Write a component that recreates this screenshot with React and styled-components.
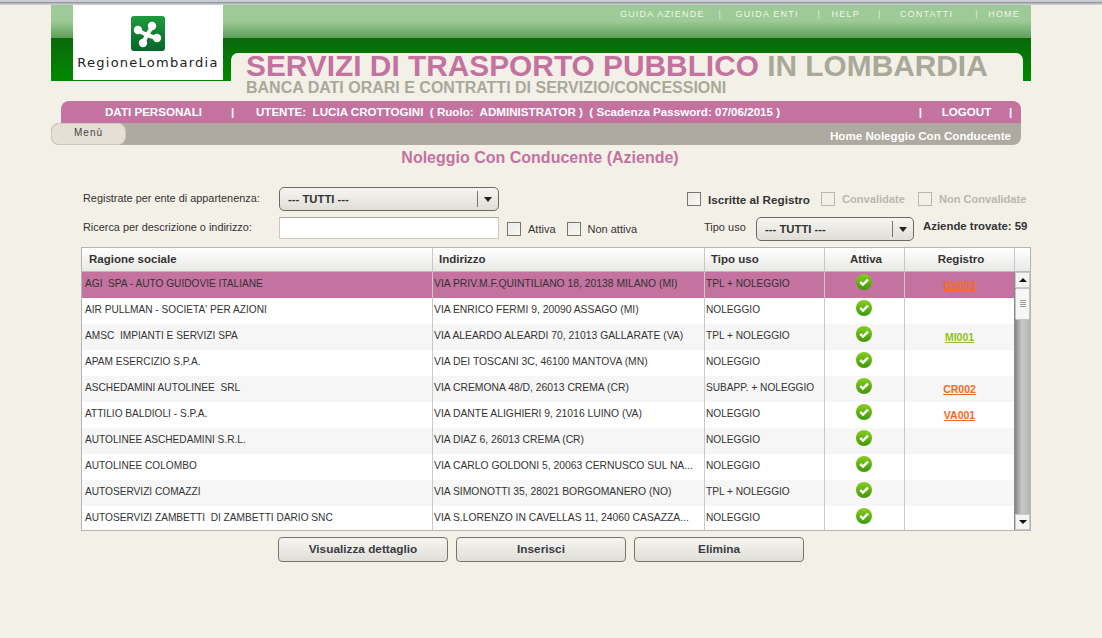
import styled, { createGlobalStyle } from 'styled-components';

const GlobalStyle = createGlobalStyle`
  html, body { margin: 0; padding: 0; }
  body {
    background: #f3f0e8;
    font-family: 'Liberation Sans', Arial, sans-serif;
    color: #333;
    overflow: hidden;
  }
`;

const pink = '#c4729f';
const columns = '351px 272px 120px 80px 110px 16px';

const aziende = [
  { nome: 'AGI  SPA - AUTO GUIDOVIE ITALIANE', indirizzo: 'VIA PRIV.M.F.QUINTILIANO 18, 20138 MILANO (MI)', uso: 'TPL + NOLEGGIO', registro: 'BS003', colore: '#f26a1b' },
  { nome: "AIR PULLMAN - SOCIETA' PER AZIONI", indirizzo: 'VIA ENRICO FERMI 9, 20090 ASSAGO (MI)', uso: 'NOLEGGIO' },
  { nome: 'AMSC  IMPIANTI E SERVIZI SPA', indirizzo: 'VIA ALEARDO ALEARDI 70, 21013 GALLARATE (VA)', uso: 'TPL + NOLEGGIO', registro: 'MI001', colore: '#8dc21f' },
  { nome: 'APAM ESERCIZIO S.P.A.', indirizzo: 'VIA DEI TOSCANI 3C, 46100 MANTOVA (MN)', uso: 'NOLEGGIO' },
  { nome: 'ASCHEDAMINI AUTOLINEE  SRL', indirizzo: 'VIA CREMONA 48/D, 26013 CREMA (CR)', uso: 'SUBAPP. + NOLEGGIO', registro: 'CR002', colore: '#f26a1b' },
  { nome: 'ATTILIO BALDIOLI - S.P.A.', indirizzo: 'VIA DANTE ALIGHIERI 9, 21016 LUINO (VA)', uso: 'NOLEGGIO', registro: 'VA001', colore: '#f26a1b' },
  { nome: 'AUTOLINEE ASCHEDAMINI S.R.L.', indirizzo: 'VIA DIAZ 6, 26013 CREMA (CR)', uso: 'NOLEGGIO' },
  { nome: 'AUTOLINEE COLOMBO', indirizzo: 'VIA CARLO GOLDONI 5, 20063 CERNUSCO SUL NA...', uso: 'NOLEGGIO' },
  { nome: 'AUTOSERVIZI COMAZZI', indirizzo: 'VIA SIMONOTTI 35, 28021 BORGOMANERO (NO)', uso: 'TPL + NOLEGGIO' },
  { nome: 'AUTOSERVIZI ZAMBETTI  DI ZAMBETTI DARIO SNC', indirizzo: 'VIA S.LORENZO IN CAVELLAS 11, 24060 CASAZZA...', uso: 'NOLEGGIO' },
];

function LogoMark() {
  return (
    <svg width="34" height="35" viewBox="0 0 34 35">
      <defs>
        <linearGradient id="logoGreen" x1="0" y1="0" x2="0" y2="1">
          <stop offset="0" stopColor="#1f9a3c" />
          <stop offset="1" stopColor="#04662a" />
        </linearGradient>
      </defs>
      <rect width="34" height="35" rx="3" fill="url(#logoGreen)" />
      <g stroke="#fff" strokeWidth="4" strokeLinecap="round">
        <line x1="8" y1="15" x2="16" y2="19" />
        <line x1="21" y1="11" x2="16" y2="19" />
        <line x1="25" y1="22" x2="16" y2="19" />
        <line x1="12" y1="27" x2="16" y2="19" />
      </g>
      <circle cx="7" cy="14" r="4.2" fill="#fff" />
      <circle cx="21" cy="10" r="4.2" fill="#fff" />
      <circle cx="26" cy="22" r="4.2" fill="#fff" />
      <circle cx="12" cy="27" r="4.2" fill="#fff" />
    </svg>
  );
}

function CheckIcon() {
  return (
    <svg width="16" height="16" viewBox="0 0 16 16">
      <defs>
        <linearGradient id="checkGreen" x1="0" y1="0" x2="0" y2="1">
          <stop offset="0" stopColor="#86d01e" />
          <stop offset="1" stopColor="#3f9606" />
        </linearGradient>
      </defs>
      <circle cx="8" cy="8" r="8" fill="url(#checkGreen)" />
      <path d="M4.2 8 L7 10.6 L12 5.6" fill="none" stroke="#fff" strokeWidth="2.4" />
    </svg>
  );
}

export default function App() {
  return (
    <>
      <GlobalStyle />
      <BrowserEdge />
      <Shell>
        <Header>
          <LogoBox>
            <LogoMark />
            <LogoText>RegioneLombardia</LogoText>
          </LogoBox>
          <HeaderMain>
            <TopNav>
              <span>GUIDA AZIENDE</span>
              <NavSep $width={31} $pad={14}>|</NavSep>
              <span>GUIDA ENTI</span>
              <NavSep $width={33} $pad={19}>|</NavSep>
              <span>HELP</span>
              <NavSep $width={40} $pad={18}>|</NavSep>
              <span>CONTATTI</span>
              <NavSep $width={35} $pad={22}>|</NavSep>
              <span>HOME</span>
            </TopNav>
            <TitlePanel>
              <Title>
                SERVIZI DI TRASPORTO PUBBLICO <TitleGrey>IN LOMBARDIA</TitleGrey>
              </Title>
              <Subtitle>BANCA DATI ORARI E CONTRATTI DI SERVIZIO/CONCESSIONI</Subtitle>
            </TitlePanel>
          </HeaderMain>
        </Header>

        <UserBar>
          <UserItem $width={127}>DATI PERSONALI</UserItem>
          <UserSep>|</UserSep>
          <UserInfo>UTENTE:&nbsp; LUCIA CROTTOGINI&nbsp; ( Ruolo:&nbsp; ADMINISTRATOR )&nbsp; ( Scadenza Password: 07/06/2015 )</UserInfo>
          <UserSep>|</UserSep>
          <UserItem $width={79} $indent={11}>LOGOUT</UserItem>
          <UserSep>|</UserSep>
        </UserBar>
        <MenuBar>
          <MenuButton>Menù</MenuButton>
          <Crumb>Home Noleggio Con Conducente</Crumb>
        </MenuBar>
        <PageTitle>Noleggio Con Conducente (Aziende)</PageTitle>

        <Filters>
          <FilterRow>
            <FilterLabel>Registrate per ente di appartenenza:</FilterLabel>
            <Select $width={220}>
              <span>--- TUTTI ---</span>
              <SelectArrow />
            </Select>
            <CheckGroup>
              <Box />
              <CheckLabel $strong>Iscritte al Registro</CheckLabel>
              <Box $disabled />
              <CheckLabel $strong $disabled>Convalidate</CheckLabel>
              <Box $disabled />
              <CheckLabel $strong $disabled>Non Convalidate</CheckLabel>
            </CheckGroup>
          </FilterRow>
          <FilterRow $second>
            <FilterLabel $second>Ricerca per descrizione o indirizzo:</FilterLabel>
            <SearchInput />
            <ActiveGroup>
              <Box />
              <CheckLabel>Attiva</CheckLabel>
              <Box />
              <CheckLabel>Non attiva</CheckLabel>
            </ActiveGroup>
            <UsoLabel>Tipo uso</UsoLabel>
            <Select $width={158}>
              <span>--- TUTTI ---</span>
              <SelectArrow />
            </Select>
            <Found>Aziende trovate: 59</Found>
          </FilterRow>
        </Filters>

        <Table>
          <HeadRow>
            <HeadCell $first>Ragione sociale</HeadCell>
            <HeadCell>Indirizzo</HeadCell>
            <HeadCell>Tipo uso</HeadCell>
            <HeadCell $center>Attiva</HeadCell>
            <HeadCell $center>Registro</HeadCell>
            <HeadCell />
          </HeadRow>
          <Body>
            <Rows>
              {aziende.map((a, i) => (
                <Row key={a.nome} $selected={i === 0} $odd={i % 2 === 0}>
                  <Cell $first>{a.nome}</Cell>
                  <Cell $wide>{a.indirizzo}</Cell>
                  <Cell>{a.uso}</Cell>
                  <IconCell><CheckIcon /></IconCell>
                  <RegistroCell>
                    {a.registro && <RegistroLink $color={a.colore}>{a.registro}</RegistroLink>}
                  </RegistroCell>
                </Row>
              ))}
            </Rows>
            <Scrollbar>
              <ScrollButton><Arrow $up /></ScrollButton>
              <Track>
                <Thumb>
                  <Grip />
                </Thumb>
              </Track>
              <ScrollButton><Arrow /></ScrollButton>
            </Scrollbar>
          </Body>
        </Table>

        <Actions>
          <ActionButton>Visualizza dettaglio</ActionButton>
          <ActionButton>Inserisci</ActionButton>
          <ActionButton>Elimina</ActionButton>
        </Actions>
      </Shell>
    </>
  );
}

const BrowserEdge = styled.div`
  height: 5px;
  box-sizing: border-box;
  background: linear-gradient(#c9ccd2 0, #c9ccd2 2px, #7d8289 2px, #a9adb3 3px, #d6d8da 5px);
`;

const Shell = styled.div`
  width: 980px;
  margin-left: 51px;
`;

const Header = styled.div`
  display: flex;
  height: 76px;
  padding-left: 22px;
  box-sizing: border-box;
  background: linear-gradient(
    #9dca96 0,
    #9dca96 16px,
    #5d9f59 33px,
    #0a680a 33px,
    #008a00 76px
  );
`;

const LogoBox = styled.div`
  width: 150px;
  height: 75px;
  background: #fff;
  display: flex;
  flex-direction: column;
  align-items: center;
  padding-top: 11px;
  box-sizing: border-box;
`;

const LogoText = styled.div`
  margin-top: 4px;
  font-family: 'DejaVu Sans', sans-serif;
  font-size: 13px;
  letter-spacing: 1.25px;
  color: #222;
  line-height: 16px;
  white-space: nowrap;
`;

const HeaderMain = styled.div`
  flex: 1;
  display: flex;
  flex-direction: column;
`;

const TopNav = styled.div`
  height: 48px;
  display: flex;
  justify-content: flex-end;
  padding: 4px 11px 0 0;
  box-sizing: border-box;
  color: #f1f5ec;
  font-size: 9px;
  letter-spacing: 1.2px;
  line-height: 11px;
  white-space: nowrap;
`;

const NavSep = styled.span`
  width: ${(p) => p.$width}px;
  padding-left: ${(p) => p.$pad}px;
  box-sizing: border-box;
  letter-spacing: 0;
  opacity: 0.8;
`;

const TitlePanel = styled.div`
  height: 28px;
  margin: 0 8px;
  padding-left: 15px;
  background: #f3f0e8;
  border-radius: 7px 7px 0 0;
`;

const Title = styled.div`
  font-size: 29.85px;
  font-weight: bold;
  line-height: 26px;
  color: ${pink};
  white-space: nowrap;
`;

const TitleGrey = styled.span`
  color: #a9a99a;
`;

const Subtitle = styled.div`
  margin-top: 1px;
  font-size: 16px;
  font-weight: bold;
  line-height: 16px;
  color: #a9a99a;
  white-space: nowrap;
`;

const UserBar = styled.div`
  margin: 20px 10px 0;
  height: 22px;
  display: flex;
  align-items: center;
  background: ${pink};
  border-radius: 8px 8px 0 0;
  padding: 0 0 2px 44px;
  box-sizing: border-box;
  color: #fff;
  font-size: 11.6px;
  font-weight: bold;
  white-space: nowrap;
`;

const UserItem = styled.span`
  width: ${(p) => p.$width}px;
  padding-left: ${(p) => p.$indent || 0}px;
  box-sizing: border-box;
`;

const UserSep = styled.span`
  width: 12px;
`;

const UserInfo = styled.span`
  width: 681px;
  padding-left: 13px;
  box-sizing: border-box;
`;

const MenuBar = styled.div`
  margin-right: 10px;
  height: 22px;
  display: flex;
  justify-content: space-between;
  align-items: center;
  background: #aea9a1;
  border-radius: 8px 0 8px 8px;
`;

const MenuButton = styled.div`
  width: 75px;
  height: 22px;
  padding-left: 22px;
  box-sizing: border-box;
  background: #e5e0d5;
  border-radius: 8px;
  border: 1px solid #cfcabf;
  font-size: 10px;
  letter-spacing: 1px;
  line-height: 18px;
  color: #444;
`;

const Crumb = styled.div`
  padding: 2px 10px 0 0;
  color: #fff;
  font-size: 11.6px;
  font-weight: bold;
`;

const PageTitle = styled.div`
  margin-top: 3px;
  padding-right: 2px;
  text-align: center;
  color: ${pink};
  font-size: 16px;
  font-weight: bold;
  line-height: 19px;
`;

const Filters = styled.div`
  margin-top: 20px;
  padding-left: 32px;
`;

const FilterRow = styled.div`
  display: flex;
  align-items: ${(p) => (p.$second ? 'flex-start' : 'center')};
  height: ${(p) => (p.$second ? 23 : 24)}px;
  margin-top: ${(p) => (p.$second ? 6 : 0)}px;
`;

const FilterLabel = styled.div`
  width: 196px;
  flex: none;
  margin-top: ${(p) => (p.$second ? 2 : -2)}px;
  font-size: 10.9px;
  line-height: 16px;
  color: #333;
  white-space: nowrap;
`;

const Select = styled.div`
  width: ${(p) => p.$width}px;
  height: 24px;
  flex: none;
  box-sizing: border-box;
  display: flex;
  align-items: center;
  justify-content: space-between;
  padding: 0 0 0 8px;
  border: 1px solid #6c6a62;
  border-radius: 5px;
  background: linear-gradient(#f6f5f1, #dfded8);
  font-size: 11.3px;
  font-weight: bold;
  color: #333;
`;

const SelectArrow = styled.span`
  position: relative;
  width: 20px;
  height: 16px;
  border-left: 1px solid #77756e;
  &::after {
    content: '';
    position: absolute;
    left: 6px;
    top: 6px;
    border: 4px solid transparent;
    border-top: 5px solid #222;
    border-bottom: 0;
  }
`;

const CheckGroup = styled.div`
  display: flex;
  flex: none;
  align-items: center;
  margin-left: 188px;
`;

const ActiveGroup = styled.div`
  display: flex;
  flex: none;
  align-items: center;
  height: 23px;
  margin-left: 8px;
  width: 197px;
`;

const Box = styled.span`
  width: 14px;
  height: 14px;
  flex: none;
  box-sizing: border-box;
  border: 1px solid ${(p) => (p.$disabled ? '#b9b7af' : '#77756e')};
  background: ${(p) => (p.$disabled ? '#f3f1ea' : 'linear-gradient(135deg, #ecebe5, #f7f7f3)')};
`;

const labelSize = (p) => {
  if (p.$disabled) return 11.1;
  return p.$strong ? 11.7 : 11;
};

const CheckLabel = styled.span`
  margin: 0 ${(p) => (p.$disabled ? 13 : 11)}px 0 7px;
  font-size: ${labelSize}px;
  font-weight: ${(p) => (p.$strong ? 'bold' : 'normal')};
  color: ${(p) => (p.$disabled ? '#b9b8b0' : '#333')};
  white-space: nowrap;
`;

const SearchInput = styled.div`
  width: 220px;
  height: 22px;
  flex: none;
  box-sizing: border-box;
  background: #fff;
  border: 1px solid #c9c9c3;
  border-top-color: #a8a8a2;
`;

const UsoLabel = styled.div`
  width: 52px;
  flex: none;
  margin-top: 3px;
  font-size: 11px;
  line-height: 14px;
  color: #333;
  white-space: nowrap;
`;

const Found = styled.div`
  flex: none;
  margin: 2px 0 0 9px;
  font-size: 11.4px;
  font-weight: bold;
  line-height: 14px;
  color: #333;
  white-space: nowrap;
`;

const Table = styled.div`
  margin: 7px 0 0 30px;
  width: 950px;
  box-sizing: border-box;
  border: 1px solid #b5b5b5;
  background: #fff;
`;

const HeadRow = styled.div`
  display: grid;
  grid-template-columns: ${columns};
  height: 24px;
  box-sizing: border-box;
  border-bottom: 1px solid #b9b9b9;
  background: linear-gradient(#ffffff, #e9e9e7);
`;

const headPad = (p) => {
  if (p.$center) return 3;
  return p.$first ? 7 : 6;
};

const HeadCell = styled.div`
  border-right: 1px solid #c9c9c9;
  padding-left: ${headPad}px;
  text-align: ${(p) => (p.$center ? 'center' : 'left')};
  font-size: 11.5px;
  font-weight: bold;
  line-height: 23px;
  color: #333;
  &:last-child { border-right: 0; }
`;

const Body = styled.div`
  display: flex;
  height: 258px;
`;

const Rows = styled.div`
  width: 932px;
  flex: none;
`;

const Row = styled.div`
  display: grid;
  grid-template-columns: 351px 272px 120px 80px 109px;
  height: 26px;
  background: ${(p) => (p.$selected ? pink : p.$odd ? '#f6f6f6' : '#fff')};
  &:nth-child(n + 10) { height: 24px; }
`;

const Cell = styled.div`
  border-right: 1px solid #c9c9c9;
  padding-left: ${(p) => (p.$first ? 3 : 1)}px;
  font-size: ${(p) => (p.$wide ? 10.35 : 10.15)}px;
  line-height: 24px;
  color: #333;
  white-space: pre;
  overflow: hidden;
`;

const IconCell = styled(Cell)`
  display: flex;
  justify-content: center;
  padding: 2px 1px 0 0;
  box-sizing: border-box;
`;

const RegistroCell = styled(Cell)`
  text-align: center;
  padding: 1px 0 0;
  box-sizing: border-box;
  border-right: 0;
`;

const RegistroLink = styled.a`
  color: ${(p) => p.$color};
  font-size: 10.5px;
  font-weight: bold;
  text-decoration: underline;
`;

const Scrollbar = styled.div`
  width: 16px;
  display: flex;
  flex-direction: column;
  border-left: 1px solid #8a8a8a;
  box-sizing: border-box;
`;

const ScrollButton = styled.div`
  height: 16px;
  display: flex;
  align-items: center;
  justify-content: center;
  box-sizing: border-box;
  background: #f4f4f2;
  border: 1px solid #c9c9c9;
`;

const Arrow = styled.span`
  border: 4px solid transparent;
  border-bottom: 0;
  border-top: 4px solid #111;
  ${(p) => p.$up && 'transform: rotate(180deg);'}
`;

const Track = styled.div`
  flex: 1;
  background: linear-gradient(90deg, #868686, #c9c9c9 45%, #b4b4b4);
`;

const Thumb = styled.div`
  height: 32px;
  box-sizing: border-box;
  background: #f6f6f4;
  border: 1px solid #c4c4c2;
  border-radius: 2px;
  display: flex;
  align-items: center;
  justify-content: center;
`;

const Grip = styled.span`
  width: 6px;
  height: 8px;
  background: repeating-linear-gradient(#999 0, #999 1px, transparent 1px, transparent 2px);
`;

const Actions = styled.div`
  display: flex;
  gap: 8px;
  margin: 6px 0 0 227px;
`;

const ActionButton = styled.div`
  width: 170px;
  height: 25px;
  box-sizing: border-box;
  border: 1px solid #77756e;
  border-radius: 4px;
  background: linear-gradient(#f6f5f1, #dfded8);
  text-align: center;
  font-size: 11.8px;
  font-weight: bold;
  line-height: 23px;
  color: #3a3a44;
`;
